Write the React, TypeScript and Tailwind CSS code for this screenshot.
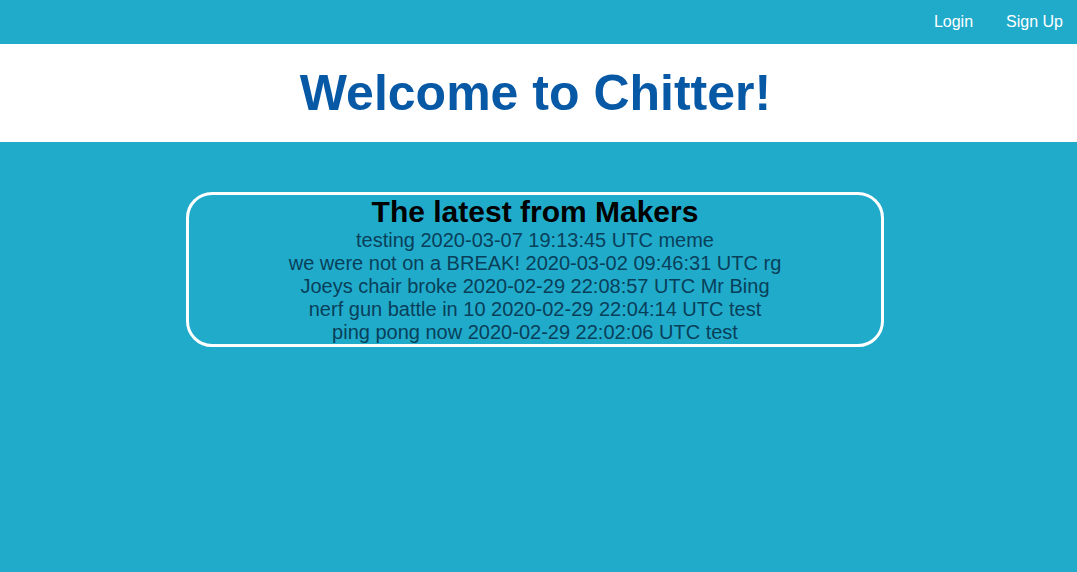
export default function App() {
  const peeps = [
    "testing 2020-03-07 19:13:45 UTC meme",
    "we were not on a BREAK! 2020-03-02 09:46:31 UTC rg",
    "Joeys chair broke 2020-02-29 22:08:57 UTC Mr Bing",
    "nerf gun battle in 10 2020-02-29 22:04:14 UTC test",
    "ping pong now 2020-02-29 22:02:06 UTC test",
  ];

  return (
    <div className="min-h-[572px] bg-[#21abcb] font-['Liberation_Sans',Arial,sans-serif]">
      <nav className="h-[44px] flex items-center justify-end gap-[33px] pr-[14px] text-white text-[16px]">
        <a href="#">Login</a>
        <a href="#">Sign Up</a>
      </nav>

      <header className="bg-white h-[98px] flex items-center justify-center pr-[6px]">
        <h1 className="text-[50px] font-bold text-[#0759a6] leading-none">
          Welcome to Chitter!
        </h1>
      </header>

      <main className="pt-[50px] flex justify-center pr-[7px]">
        <div className="w-[698px] border-[3px] border-white rounded-[26px] text-center">
          <h2 className="text-[30px] font-bold text-black leading-[34px]">
            The latest from Makers
          </h2>
          <ul>
            {peeps.map((p) => (
              <li key={p} className="text-[20px] leading-[23px] text-[#08405a]">
                {p}
              </li>
            ))}
          </ul>
        </div>
      </main>
    </div>
  );
}
